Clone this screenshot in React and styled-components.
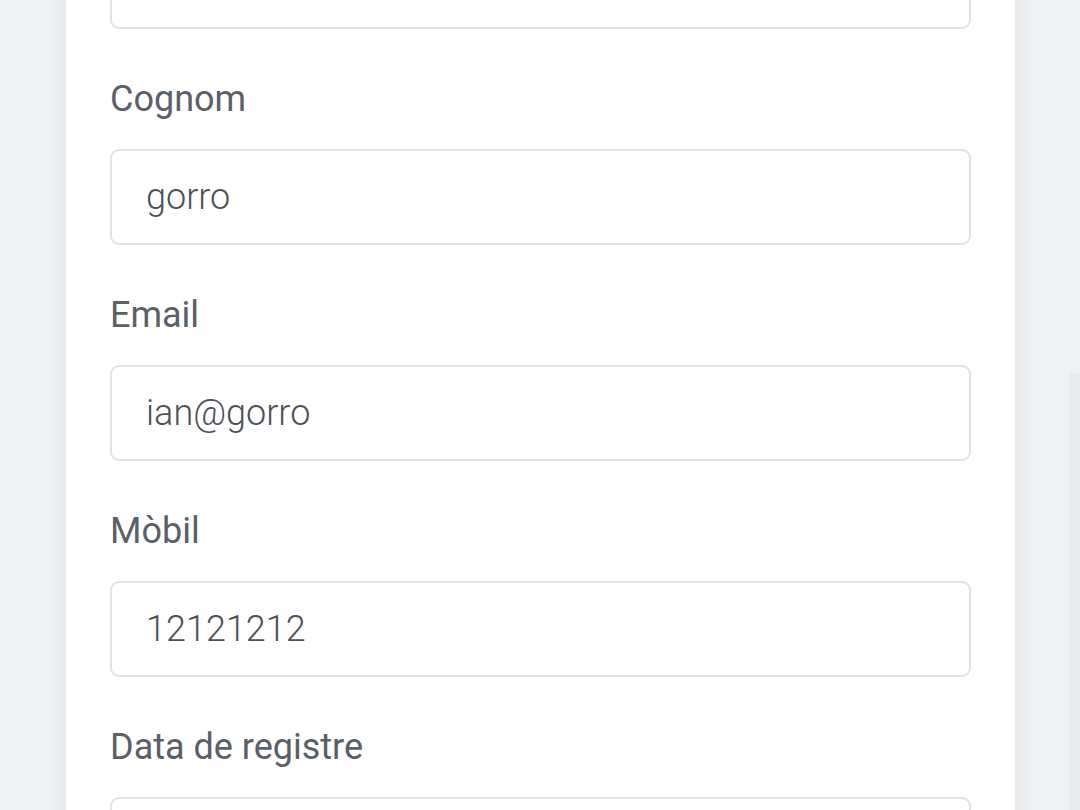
import React from "react";
import styled, { createGlobalStyle } from "styled-components";

const Global = createGlobalStyle`
  html, body { margin: 0; padding: 0; background: #f0f1f3; }
  body { font-family: Roboto, "Noto Sans", sans-serif; overflow: hidden; }
  * { box-sizing: border-box; }
`;

const Page = styled.div`
  display: flex;
  align-items: flex-start;
  height: 810px;
  overflow: hidden;
`;

const Card = styled.form`
  flex: 0 0 949px;
  margin-left: 66px;
  margin-top: -144px;
  padding: 0 44px 200px;
  background: #ffffff;
  box-shadow: 0 0 18px rgba(40, 45, 60, 0.10);
  display: flex;
  flex-direction: column;
`;

const Field = styled.div`
  display: flex;
  flex-direction: column;
  padding-bottom: 43px;
`;

const Label = styled.label`
  font-size: 36px;
  line-height: 54px;
  color: #5a6068;
  font-weight: 400;
  margin-bottom: 23px;
`;

const Input = styled.input`
  height: 96px;
  width: 100%;
  border: 2px solid #e0e2e6;
  border-radius: 9px;
  padding: 0 34px;
  font-family: Roboto, sans-serif;
  font-size: 36px;
  font-weight: 300;
  color: #4c5157;
  background: #fff;
  outline: none;
`;

const Side = styled.div`
  flex: 0 0 40px;
  margin-left: 55px;
  margin-top: 373px;
  height: 600px;
  background: #e9eaec;
`;

const fields = [
  { label: "Nom", value: "" },
  { label: "Cognom", value: "gorro" },
  { label: "Email", value: "ian@gorro" },
  { label: "Mòbil", value: "12121212" },
  { label: "Data de registre", value: "" },
];

export default function App() {
  return (
    <>
      <Global />
      <Page>
        <Card onSubmit={(e) => e.preventDefault()}>
          {fields.map((f) => (
            <Field key={f.label}>
              <Label>{f.label}</Label>
              <Input defaultValue={f.value} readOnly />
            </Field>
          ))}
        </Card>
        <Side />
      </Page>
    </>
  );
}
